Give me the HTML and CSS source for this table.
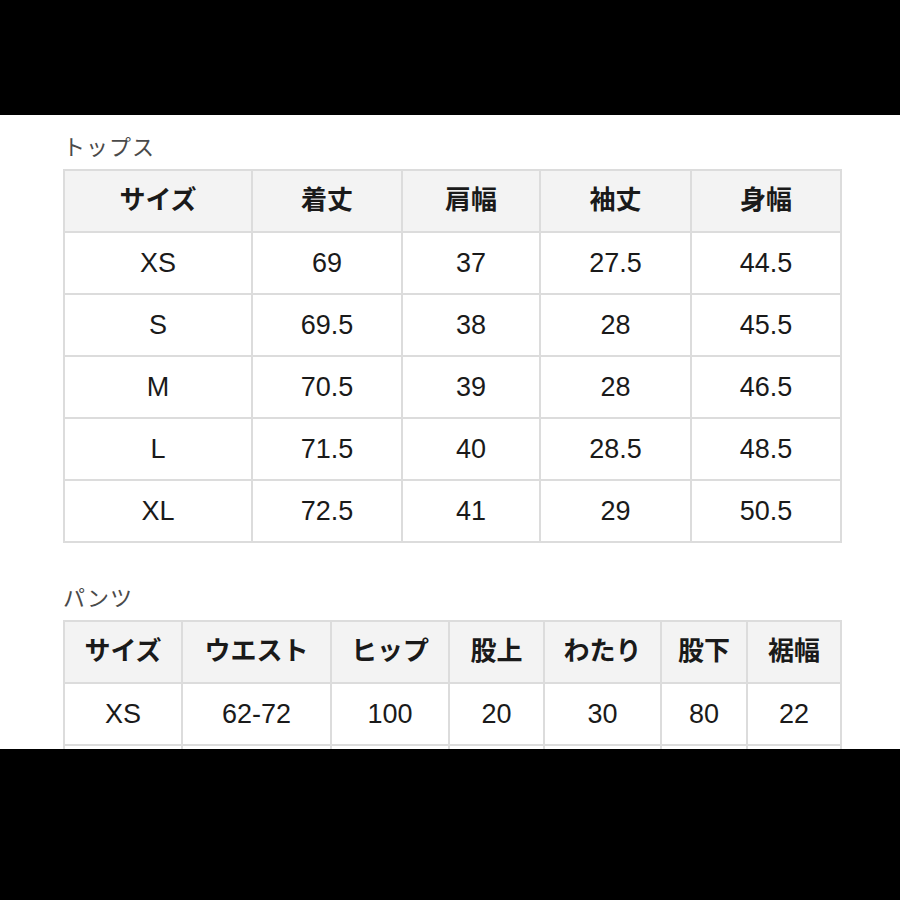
FILE: index.html
```html
<!DOCTYPE html>
<html lang="ja">
<head>
<meta charset="utf-8">
<link rel="stylesheet" href="styles.css">
</head>
<body>
<div class="bar top"></div>
<main class="sheet">
  <h2 class="title">トップス</h2>
  <table class="size t1">
    <colgroup>
      <col class="w188"><col class="w150"><col class="w138"><col class="w151"><col class="w150">
    </colgroup>
    <thead>
      <tr><th>サイズ</th><th>着丈</th><th>肩幅</th><th>袖丈</th><th>身幅</th></tr>
    </thead>
    <tbody>
      <tr><td>XS</td><td>69</td><td>37</td><td>27.5</td><td>44.5</td></tr>
      <tr><td>S</td><td>69.5</td><td>38</td><td>28</td><td>45.5</td></tr>
      <tr><td>M</td><td>70.5</td><td>39</td><td>28</td><td>46.5</td></tr>
      <tr><td>L</td><td>71.5</td><td>40</td><td>28.5</td><td>48.5</td></tr>
      <tr><td>XL</td><td>72.5</td><td>41</td><td>29</td><td>50.5</td></tr>
    </tbody>
  </table>
  <h2 class="title second">パンツ</h2>
  <table class="size t2">
    <colgroup>
      <col class="w118"><col class="w149"><col class="w118"><col class="w95"><col class="w117"><col class="w86"><col class="w94">
    </colgroup>
    <thead>
      <tr><th>サイズ</th><th>ウエスト</th><th>ヒップ</th><th>股上</th><th>わたり</th><th>股下</th><th>裾幅</th></tr>
    </thead>
    <tbody>
      <tr><td>XS</td><td>62-72</td><td>100</td><td>20</td><td>30</td><td>80</td><td>22</td></tr>
      <tr><td></td><td></td><td></td><td></td><td></td><td></td><td></td></tr>
    </tbody>
  </table>
</main>
<div class="bar bottom"></div>
</body>
</html>
```
FILE: styles.css
```css
html, body {
  margin: 0;
  padding: 0;
  background: #000;
}
body {
  width: 900px;
  height: 900px;
  overflow: hidden;
  display: flex;
  flex-direction: column;
}
.bar {
  background: #000;
}
.bar.top {
  height: 115px;
  flex: none;
}
.bar.bottom {
  flex: 1;
}
.sheet {
  height: 634px;
  flex: none;
  overflow: hidden;
  background: #fff;
  padding: 15px 0 0 63px;
  box-sizing: border-box;
}
.title {
  margin: 0 0 9px 0;
  font-family: "Noto Sans CJK JP", sans-serif;
  font-weight: 400;
  font-size: 22px;
  line-height: 30px;
  color: #4a4a4a;
  letter-spacing: 1px;
}
.title.second {
  margin-top: 38px;
  margin-bottom: 9px;
}
.size {
  border-collapse: collapse;
  table-layout: fixed;
  width: 778px;
}
.size th,
.size td {
  border: 2px solid #dcdcdc;
  text-align: center;
  padding: 0;
  height: 60px;
  color: #1a1a1a;
}
.size th {
  background: #f3f3f3;
  font-family: "Noto Sans CJK JP", sans-serif;
  font-weight: 700;
  font-size: 26px;
  line-height: 34px;
  padding-bottom: 6px;
  height: 54px;
}
.size td {
  background: #fff;
  font-family: "Liberation Sans", Arial, sans-serif;
  font-size: 27px;
}
.w188 { width: 188px; }
.w150 { width: 150px; }
.w138 { width: 138px; }
.w151 { width: 151px; }
.w118 { width: 118px; }
.w149 { width: 149px; }
.w95 { width: 95px; }
.w117 { width: 117px; }
.w86 { width: 86px; }
.w94 { width: 94px; }
```
